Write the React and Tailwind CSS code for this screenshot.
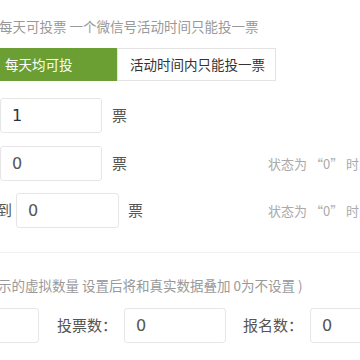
export default function App() {
  const font = { fontFamily: '"Noto Sans CJK SC", "Noto Sans", sans-serif' };
  const num = { fontFamily: '"DejaVu Sans", sans-serif' };
  return (
    <div className="w-[360px] h-[360px] overflow-hidden bg-white text-[#555]" style={font}>
      <div className="mt-[16px] -ml-[1px] whitespace-nowrap text-[13.5px] leading-[20px] text-[#999]">
        每天可投票 一个微信号活动时间只能投一票
      </div>
      <div className="mt-[12px] flex">
        <div className="flex h-[33px] w-[117px] shrink-0 items-center bg-[#6b9e33] pl-[5px] text-[13.5px] text-white">每天均可投</div>
        <div className="flex h-[33px] w-[159px] shrink-0 items-center border border-[#e3e3e3] pl-[12px] text-[13.5px] text-[#333]">活动时间内只能投一票</div>
      </div>
      <div className="mt-[17px] flex items-center">
        <div className="flex h-[35px] w-[102px] shrink-0 items-center rounded-[3px] border border-[#e6e6e6] pl-[11px] text-[16px] text-[#2b2f45]" style={num}>1</div>
        <span className="ml-[10px] text-[15px] text-[#555]">票</span>
      </div>
      <div className="mt-[13px] flex items-center whitespace-nowrap">
        <div className="flex h-[35px] w-[102px] shrink-0 items-center rounded-[3px] border border-[#e6e6e6] pl-[11px] text-[16px] text-[#555]" style={num}>0</div>
        <span className="ml-[10px] shrink-0 text-[15px]">票</span>
        <span className="ml-[141px] shrink-0 text-[13px] text-[#aaa]">状态为 “0” 时间</span>
      </div>
      <div className="mt-[12px] flex items-center whitespace-nowrap">
        <span className="-ml-[3px] w-[19px] shrink-0 text-[15px]">到</span>
        <div className="flex h-[35px] w-[103px] shrink-0 items-center rounded-[3px] border border-[#e6e6e6] pl-[11px] text-[16px] text-[#555]" style={num}>0</div>
        <span className="ml-[9px] shrink-0 text-[15px]">票</span>
        <span className="ml-[125px] shrink-0 text-[13px] text-[#aaa]">状态为 “0” 时间</span>
      </div>
      <div className="mt-[24px] h-px bg-[#f0f0f0]" />
      <div className="mt-[22px] -ml-[2px] whitespace-nowrap text-[13.5px] leading-[20px] text-[#999]">
        示的虚拟数量 设置后将和真实数据叠加 0为不设置 )
      </div>
      <div className="mt-[13px] flex items-center whitespace-nowrap">
        <div className="-ml-[61px] h-[35px] w-[100px] shrink-0 rounded-[3px] border border-[#e6e6e6]" />
        <span className="ml-[18px] shrink-0 text-[15px]">投票数：</span>
        <div className="ml-[7px] flex h-[35px] w-[102px] shrink-0 items-center rounded-[3px] border border-[#e6e6e6] pl-[11px] text-[16px] text-[#555]" style={num}>0</div>
        <span className="ml-[17px] shrink-0 text-[15px]">报名数：</span>
        <div className="ml-[7px] flex h-[35px] w-[102px] shrink-0 items-center rounded-[3px] border border-[#e6e6e6] pl-[11px] text-[16px] text-[#555]" style={num}>0</div>
      </div>
    </div>
  );
}
